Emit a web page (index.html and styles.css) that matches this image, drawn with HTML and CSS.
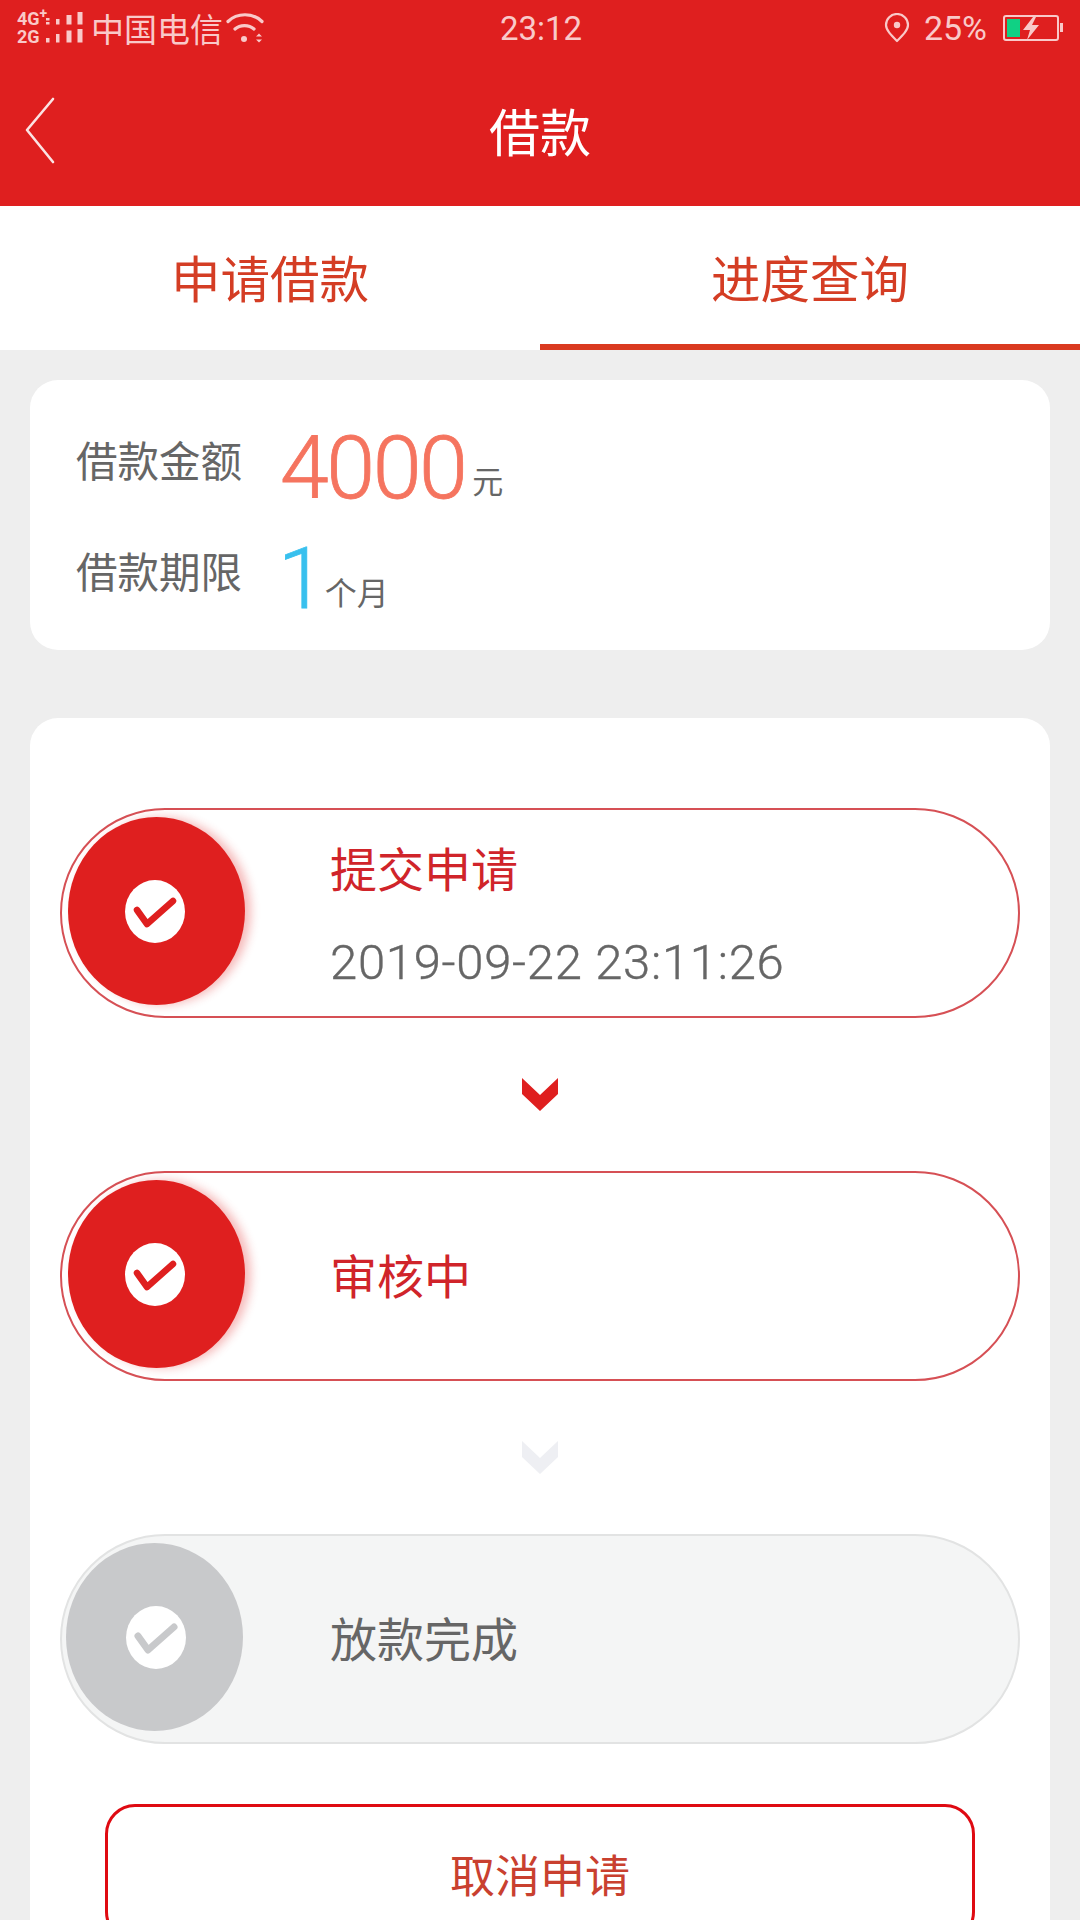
FILE: index.html
```html
<!DOCTYPE html>
<html lang="zh-CN">
<head>
  <meta charset="UTF-8">
  <meta name="viewport" content="width=device-width, initial-scale=1.0">
  <title>借款</title>
  <link rel="stylesheet" href="styles.css">
</head>
<body>
  <div class="top-bar">
    <div class="status-bar">
      <div class="status-left">
        <div class="net-type"><span>4G<sup>+</sup></span><span>2G</span></div>
        <svg class="signal" width="38" height="32" viewBox="0 0 38 32">
          <g fill="#f9c9c9">
            <rect x="0" y="6" width="3.5" height="2.5"/><rect x="0" y="10" width="3.5" height="2.5"/>
            <rect x="10" y="7" width="3.5" height="5.5"/><rect x="20.5" y="3" width="5" height="9.5"/><rect x="31.5" y="0" width="5" height="12.5"/>
            <rect x="0" y="26" width="3.5" height="4.5"/><rect x="10" y="22" width="3.5" height="8.5"/><rect x="20.5" y="18.5" width="5" height="12"/><rect x="31.5" y="17" width="5" height="13.5"/>
          </g>
        </svg>
        <span class="carrier">中国电信</span>
        <svg class="wifi" width="38" height="32" viewBox="0 0 38 32">
          <g fill="none" stroke="#f9c9c9" stroke-width="3.2" stroke-linecap="round">
            <path d="M2 9.5C11 0.5 27 0.5 36 9.5"/>
            <path d="M9 17C14 12.5 23 12.5 28 17"/>
          </g>
          <circle cx="18" cy="27" r="3" fill="#f9c9c9"/>
          <path d="M30 24.5L33 21.5L36 24.5ZM30 27.5L33 30.5L36 27.5Z" fill="#f9c9c9"/>
        </svg>
      </div>
      <div class="status-time">23:12</div>
      <div class="status-right">
        <svg class="pin" width="26" height="30" viewBox="0 0 26 30">
          <path d="M13 28C7 22 2 17 2 12A11 11 0 0 1 24 12C24 17 19 22 13 28Z" fill="none" stroke="#f9c9c9" stroke-width="2.2" stroke-linejoin="round"/>
          <circle cx="13" cy="12" r="3.2" fill="#f9c9c9"/>
        </svg>
        <span class="battery-pct">25%</span>
        <svg class="battery" width="62" height="26" viewBox="0 0 62 26">
          <rect x="1" y="1" width="54" height="24" rx="2" fill="none" stroke="#f9c9c9" stroke-width="2"/>
          <rect x="4" y="4" width="13" height="18" fill="#10d184"/>
          <path d="M30 2L20 15H27L24 25L36 10H29L33 2Z" fill="#f9c9c9"/>
          <rect x="57" y="8" width="3" height="9" fill="#f9c9c9"/>
        </svg>
      </div>
    </div>
    <div class="nav-bar">
      <svg class="back" width="32" height="68" viewBox="0 0 32 68">
        <path d="M29 2L3 33L29 65" fill="none" stroke="#fbe3e3" stroke-width="2.6" stroke-linecap="round" stroke-linejoin="round"/>
      </svg>
      <h1>借款</h1>
    </div>
  </div>

  <div class="tabs">
    <div class="tab">申请借款</div>
    <div class="tab active">进度查询</div>
  </div>

  <div class="card summary">
    <div class="summary-row">
      <span class="summary-label">借款金额</span>
      <div class="summary-value">
        <span class="num amount">4000</span><span class="unit">元</span>
      </div>
    </div>
    <div class="summary-row">
      <span class="summary-label">借款期限</span>
      <div class="summary-value">
        <span class="num term">1</span><span class="unit unit-term">个月</span>
      </div>
    </div>
  </div>

  <div class="card progress">
    <div class="step">
      <div class="step-circle">
        <svg class="tick" width="60" height="63" viewBox="0 0 60 63">
          <ellipse cx="30" cy="31.5" rx="30" ry="31.5" fill="#fff"/>
          <path d="M12 30L22 44L48 21" fill="none" stroke="#df1f1f" stroke-width="6.5" stroke-linecap="round" stroke-linejoin="round"/>
        </svg>
      </div>
      <div class="step-text step-text-double">
        <div class="step-title">提交申请</div>
        <div class="step-date">2019-09-22 23:11:26</div>
      </div>
    </div>

    <svg class="arrow" width="36" height="33" viewBox="0 0 36 33">
      <polygon points="0,0 18,17 36,0 36,16 18,33 0,16" fill="#df1f1f"/>
    </svg>

    <div class="step">
      <div class="step-circle">
        <svg class="tick" width="60" height="63" viewBox="0 0 60 63">
          <ellipse cx="30" cy="31.5" rx="30" ry="31.5" fill="#fff"/>
          <path d="M12 30L22 44L48 21" fill="none" stroke="#df1f1f" stroke-width="6.5" stroke-linecap="round" stroke-linejoin="round"/>
        </svg>
      </div>
      <div class="step-text">
        <div class="step-title">审核中</div>
      </div>
    </div>

    <svg class="arrow" width="36" height="33" viewBox="0 0 36 33">
      <polygon points="0,0 18,17 36,0 36,16 18,33 0,16" fill="#eeeff3"/>
    </svg>

    <div class="step pending">
      <div class="step-circle">
        <svg class="tick" width="60" height="63" viewBox="0 0 60 63">
          <ellipse cx="30" cy="31.5" rx="30" ry="31.5" fill="#fff"/>
          <path d="M12 30L22 44L48 21" fill="none" stroke="#c8c9cb" stroke-width="7" stroke-linecap="round" stroke-linejoin="round"/>
        </svg>
      </div>
      <div class="step-text">
        <div class="step-title">放款完成</div>
      </div>
    </div>

    <button class="cancel">取消申请</button>
  </div>
</body>
</html>
```

FILE: styles.css
```css
html, body {
  margin: 0;
  padding: 0;
}
body {
  width: 1080px;
  height: 1920px;
  overflow: hidden;
  background-color: #eeeeee;
  color: #666666;
  font-family: Roboto, "Noto Sans CJK SC", sans-serif;
}

/* Red top area */
.top-bar {
  height: 206px;
  background-color: #df1f1f;
}
.status-bar {
  display: grid;
  grid-template-columns: 1fr auto 1fr;
  align-items: center;
  height: 56px;
  padding: 0 15px 0 17px;
  color: #f9c9c9;
}
.status-left,
.status-right {
  display: flex;
  align-items: center;
}
.status-right {
  justify-content: flex-end;
}
.net-type {
  display: flex;
  flex-direction: column;
  width: 28px;
  font-size: 18px;
  font-weight: 700;
  line-height: 18px;
  white-space: nowrap;
}
.net-type sup {
  font-size: 14px;
  line-height: 0;
}
.signal {
  margin-left: 1px;
}
.carrier {
  margin-left: 7px;
  font-size: 33px;
}
.wifi {
  margin-left: 3px;
}
.status-time {
  font-size: 33px;
}
.pin {
  margin-right: 14px;
}
.battery-pct {
  font-size: 34px;
}
.battery {
  margin-left: 16px;
}
.nav-bar {
  position: relative;
  display: flex;
  justify-content: center;
  align-items: center;
  box-sizing: border-box;
  height: 150px;
  padding-bottom: 3px;
}
.nav-bar h1 {
  margin: 0;
  color: #ffffff;
  font-size: 51px;
  font-weight: 400;
}
.back {
  position: absolute;
  left: 24px;
  top: 41px;
}

/* Tabs */
.tabs {
  display: flex;
  height: 144px;
  background-color: #ffffff;
}
.tab {
  flex: 1;
  display: flex;
  justify-content: center;
  align-items: center;
  box-sizing: border-box;
  padding-top: 2px;
  border-bottom: 6px solid transparent;
  color: #d43d24;
  font-size: 49.5px;
}
.tab.active {
  border-bottom-color: #da3a20;
}

/* Cards */
.card {
  margin: 0 30px;
  background-color: #ffffff;
  border-radius: 28px;
}
.summary {
  margin-top: 30px;
  height: 270px;
  box-sizing: border-box;
  padding: 23px 0 0 46px;
}
.summary-row {
  display: flex;
  align-items: center;
  height: 111px;
}
.summary-label {
  width: 166px;
  font-size: 41.5px;
  white-space: nowrap;
}
.summary-value {
  display: flex;
  align-items: baseline;
  margin-left: 38px;
  padding-top: 19px;
}
.num {
  font-size: 88px;
  font-weight: 300;
  letter-spacing: -2.5px;
  line-height: 1;
  -webkit-text-stroke: 0.8px;
}
.amount {
  color: #f5745f;
}
.term {
  margin-left: -2px;
  color: #38c0ee;
  font-size: 85px;
}
.unit {
  position: relative;
  top: -5px;
  margin-left: 7px;
  font-size: 31px;
}
.unit-term {
  top: -3px;
  margin-left: 2px;
  font-size: 32px;
}

/* Progress steps */
.progress {
  display: flex;
  flex-direction: column;
  align-items: center;
  margin-top: 68px;
  padding: 90px 30px 60px;
}
.step {
  display: flex;
  align-items: center;
  box-sizing: border-box;
  width: 100%;
  height: 210px;
  padding-left: 6px;
  border: 2px solid #d65055;
  border-radius: 105px;
}
.step-circle {
  display: flex;
  justify-content: center;
  align-items: center;
  flex: none;
  width: 177px;
  height: 188px;
  margin-top: -4px;
  border-radius: 50%;
  background-color: #df1f1f;
  box-shadow: 6px 0 10px rgba(223, 31, 31, 0.3);
}
.tick {
  margin-right: 3px;
}
.step-text {
  margin-left: 85px;
}
.step-text-double {
  padding-top: 6px;
}
.step-title {
  position: relative;
  top: 2px;
  color: #d0242a;
  font-size: 47px;
  line-height: 60px;
}
.step-date {
  margin-top: 34px;
  font-size: 49px;
  font-weight: 300;
  letter-spacing: 0.7px;
  line-height: 60px;
  -webkit-text-stroke: 0.4px;
}
.step.pending {
  border-color: #e2e3e3;
  background-color: #f4f5f5;
}
.step.pending .step-circle {
  margin-left: -2px;
  margin-right: 2px;
  background-color: #c8c9cb;
  box-shadow: none;
}
.step.pending .tick {
  margin-left: 2px;
  margin-right: 0;
}
.step.pending .step-title {
  color: #666666;
}
.arrow {
  flex: none;
  margin: 60px 0;
}

/* Cancel button */
.cancel {
  flex: none;
  width: 870px;
  height: 138px;
  margin-top: 60px;
  border: 3px solid #df0a12;
  border-radius: 30px;
  background-color: #ffffff;
  color: #c9402f;
  font-family: inherit;
  font-size: 45px;
}
```
